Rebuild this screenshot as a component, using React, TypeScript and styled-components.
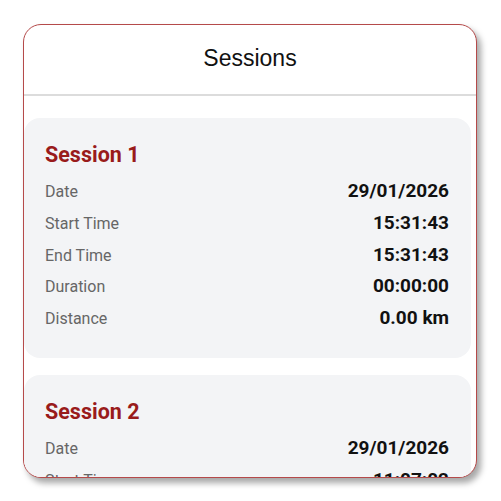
import styled, { createGlobalStyle } from 'styled-components';

const GlobalStyle = createGlobalStyle`
  html, body {
    margin: 0;
    padding: 0;
    background: #ffffff;
  }
  body {
    font-family: Roboto, 'Noto Sans', sans-serif;
  }
`;

const Page = styled.div`
  width: 501px;
  height: 501px;
  padding: 24px 24px 24px 23px;
  box-sizing: border-box;
`;

const Frame = styled.div`
  width: 454px;
  height: 454px;
  box-sizing: border-box;
  border: 1px solid #b54a4a;
  border-radius: 18px;
  background: #ffffff;
  box-shadow: 4px 5px 6px rgba(0, 0, 0, 0.35);
  overflow: hidden;
  display: flex;
  flex-direction: column;
`;

const Header = styled.div`
  height: 71px;
  flex-shrink: 0;
  display: flex;
  align-items: center;
  justify-content: center;
  padding-bottom: 3px;
  box-sizing: border-box;
  border-bottom: 2px solid #dcdcdc;
  font-family: 'Liberation Sans', Arial, sans-serif;
  font-size: 23px;
  color: #111111;
`;

const List = styled.div`
  flex: 1;
  overflow: hidden;
  padding: 22px 5px 0 0;
  display: flex;
  flex-direction: column;
  gap: 17px;
`;

const Card = styled.div`
  flex-shrink: 0;
  background: #f3f4f6;
  border-radius: 16px;
  padding: 23px 22px 24px 21px;
`;

const Title = styled.div`
  font-size: 21.5px;
  font-weight: 700;
  line-height: 28px;
  color: #991b1b;
  margin-bottom: 6px;
`;

const Row = styled.div`
  display: flex;
  justify-content: space-between;
  align-items: baseline;
  height: 31.75px;
  padding-top: 4px;
  box-sizing: border-box;
`;

const Label = styled.span`
  font-size: 16px;
  color: #666666;
`;

const Value = styled.span`
  font-size: 19px;
  font-weight: 700;
  color: #111111;
`;

type Session = {
  name: string;
  date: string;
  start: string;
  end: string;
  duration: string;
  distance: string;
};

const sessions: Session[] = [
  { name: 'Session 1', date: '29/01/2026', start: '15:31:43', end: '15:31:43', duration: '00:00:00', distance: '0.00 km' },
  { name: 'Session 2', date: '29/01/2026', start: '11:07:02', end: '11:07:02', duration: '00:00:00', distance: '0.00 km' },
];

export default function App() {
  return (
    <Page>
      <GlobalStyle />
      <Frame>
        <Header>Sessions</Header>
        <List>
          {sessions.map((s) => (
            <Card key={s.name}>
              <Title>{s.name}</Title>
              <Row><Label>Date</Label><Value>{s.date}</Value></Row>
              <Row><Label>Start Time</Label><Value>{s.start}</Value></Row>
              <Row><Label>End Time</Label><Value>{s.end}</Value></Row>
              <Row><Label>Duration</Label><Value>{s.duration}</Value></Row>
              <Row><Label>Distance</Label><Value>{s.distance}</Value></Row>
            </Card>
          ))}
        </List>
      </Frame>
    </Page>
  );
}
